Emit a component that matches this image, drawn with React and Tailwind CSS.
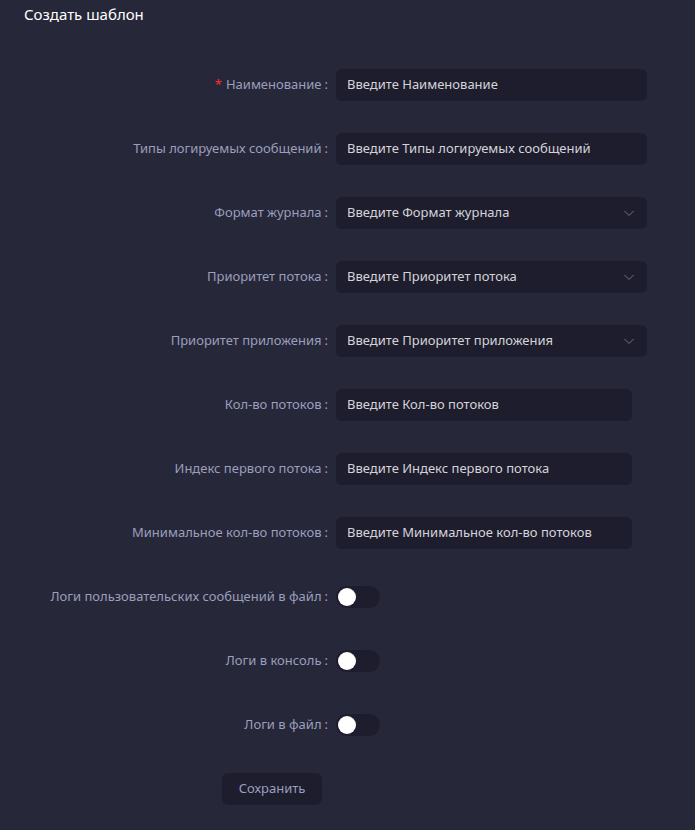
import React, { useState } from 'react';

const fields = [
  { label: 'Наименование', placeholder: 'Введите Наименование', required: true, width: 'w-[311px]' },
  { label: 'Типы логируемых сообщений', placeholder: 'Введите Типы логируемых сообщений', width: 'w-[311px]' },
  { label: 'Формат журнала', placeholder: 'Введите Формат журнала', select: true, width: 'w-[311px]' },
  { label: 'Приоритет потока', placeholder: 'Введите Приоритет потока', select: true, width: 'w-[311px]' },
  { label: 'Приоритет приложения', placeholder: 'Введите Приоритет приложения', select: true, width: 'w-[311px]' },
  { label: 'Кол-во потоков', placeholder: 'Введите Кол-во потоков', width: 'w-[296px]' },
  { label: 'Индекс первого потока', placeholder: 'Введите Индекс первого потока', width: 'w-[296px]' },
  { label: 'Минимальное кол-во потоков', placeholder: 'Введите Минимальное кол-во потоков', width: 'w-[296px]' },
];

const switches = ['Логи пользовательских сообщений в файл', 'Логи в консоль', 'Логи в файл'];

const Label = ({ text, required }) => (
  <div className="flex w-[336px] shrink-0 items-center justify-end pr-[8px] text-[13px] text-[#9a9fbb]">
    {required ? <span className="mr-[4px] text-[#ff2d2d]">*</span> : null}
    <span>{text}</span>
    <span className="ml-[3px]">:</span>
  </div>
);

const Toggle = () => {
  const [on, setOn] = useState(false);
  return (
    <button
      type="button"
      onClick={() => setOn((v) => !v)}
      className={`flex h-[22px] w-[44px] items-center rounded-full px-[2px] ${on ? 'justify-end bg-[#3b3f66]' : 'justify-start bg-[#1e1d2e]'}`}
    >
      <span className="block h-[18px] w-[18px] rounded-full bg-white" />
    </button>
  );
};

const Chevron = () => (
  <svg width="12" height="12" viewBox="0 0 12 12" fill="none" className="text-[#6f7290]">
    <path d="M1.5 4l4.5 4.5L10.5 4" stroke="currentColor" strokeWidth="1" />
  </svg>
);

const App = () => {
  return (
    <div className="min-h-[830px] bg-[#27273a] font-['Noto_Sans','Open_Sans',sans-serif]">
      <div className="px-[24px] pt-[3px] text-[15px] leading-[22px] text-white">Создать шаблон</div>

      <div className="mt-[44px] flex flex-col gap-[32px]">
        {fields.map((f) => (
          <div key={f.label} className="flex h-[32px] items-center">
            <Label text={f.label} required={f.required} />
            <div
              className={`flex h-[32px] ${f.width} items-center justify-between rounded-[6px] bg-[#1e1d2e] pl-[11px] pr-[12px] text-[13px] text-[#d4d4d8]`}
            >
              <span>{f.placeholder}</span>
              {f.select ? <Chevron /> : null}
            </div>
          </div>
        ))}

        {switches.map((s) => (
          <div key={s} className="flex h-[32px] items-center">
            <Label text={s} />
            <Toggle />
          </div>
        ))}

        <div className="flex h-[32px] items-center">
          <div className="w-[222px] shrink-0" />
          <button
            type="button"
            className="h-[32px] w-[100px] rounded-[6px] bg-[#1e1d2e] text-[13px] text-[#9a9fbb]"
          >
            Сохранить
          </button>
        </div>
      </div>
    </div>
  );
};

export default App;
